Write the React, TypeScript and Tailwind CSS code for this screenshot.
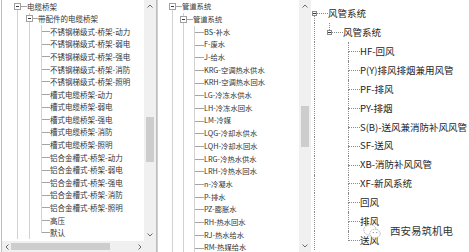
import React from 'react';

type Col = { guide: string; ml: string; boxMl: string; own: string };

type Panel = {
  row: string;
  pad: string;
  cols: Col[];
  guides: boolean[];
  vLine: string;
  hLine: string;
  box: string;
  text: string;
};

type Item = { label: string; level: number; open?: boolean; last?: boolean };

const leftPanel: Panel = {
  row: 'h-[12.6px]',
  pad: 'pl-[10px] pt-0',
  cols: [
    { guide: 'w-[12px]', ml: 'ml-[5px]', boxMl: 'ml-[2px]', own: 'w-[15px]' },
    { guide: 'w-[12px]', ml: 'ml-[5px]', boxMl: 'ml-[2px]', own: 'w-[14px]' },
    { guide: 'w-[12px]', ml: 'ml-[5px]', boxMl: 'ml-[2px]', own: 'w-[14px]' },
  ],
  guides: [true, true],
  vLine: 'w-px bg-[#d2d2d2]',
  hLine: 'h-px bg-[#a4a4a4]',
  box: 'w-[7px] h-[7px] shrink-0 border border-[#a0a0a0] bg-white flex items-center justify-center',
  text: 'text-[7.5px] text-[#333]',
};

const midPanel: Panel = {
  row: 'h-[12.7px]',
  pad: 'pl-[9px] pt-[0.6px]',
  cols: [
    { guide: 'w-[11px]', ml: 'ml-[5px]', boxMl: 'ml-[2px]', own: 'w-[15px]' },
    { guide: 'w-[11px]', ml: 'ml-[5px]', boxMl: 'ml-[2px]', own: 'w-[15px]' },
    { guide: 'w-[11px]', ml: 'ml-[5px]', boxMl: 'ml-[2px]', own: 'w-[15px]' },
  ],
  guides: [true, true],
  vLine: 'w-px bg-[#d2d2d2]',
  hLine: 'h-px bg-[#a4a4a4]',
  box: 'w-[7px] h-[7px] shrink-0 border border-[#a0a0a0] bg-white flex items-center justify-center',
  text: 'text-[7.3px] text-[#333]',
};

const rightPanel: Panel = {
  row: 'h-[18.9px]',
  pad: 'pl-0 pt-[4.5px]',
  cols: [
    { guide: 'w-[11px]', ml: 'ml-[3px]', boxMl: 'ml-[1px]', own: 'w-[17px]' },
    { guide: 'w-[15px]', ml: 'ml-[7px]', boxMl: 'ml-[5px]', own: 'w-[21px]' },
    { guide: 'w-[21px]', ml: 'ml-[11px]', boxMl: 'ml-[9px]', own: 'w-[23px]' },
  ],
  guides: [true, false],
  vLine: 'w-0 border-l border-dotted border-[#8a8a8a]',
  hLine: 'h-0 border-t border-dotted border-[#8a8a8a]',
  box: 'w-[5px] h-[5px] shrink-0 border border-[#8a8a8a] bg-white flex items-center justify-center',
  text: 'text-[9.5px] text-[#1e1e1e]',
};

const leaf = (label: string, last?: boolean): Item => ({ label, level: 2, last });

const leftItems: Item[] = [
  { label: '电缆桥架', level: 0, open: true },
  { label: '带配件的电缆桥架', level: 1, open: true },
  ...[
    '不锈钢梯级式-桥架-动力',
    '不锈钢梯级式-桥架-弱电',
    '不锈钢梯级式-桥架-强电',
    '不锈钢梯级式-桥架-消防',
    '不锈钢梯级式-桥架-照明',
    '槽式电缆桥架-动力',
    '槽式电缆桥架-弱电',
    '槽式电缆桥架-强电',
    '槽式电缆桥架-消防',
    '槽式电缆桥架-照明',
    '铝合金槽式-桥架-动力',
    '铝合金槽式-桥架-弱电',
    '铝合金槽式-桥架-强电',
    '铝合金槽式-桥架-消防',
    '铝合金槽式-桥架-照明',
    '高压',
  ].map((l) => leaf(l)),
  leaf('默认', true),
];

const midItems: Item[] = [
  { label: '管道系统', level: 0, open: true },
  { label: '管道系统', level: 1, open: true },
  ...[
    'BS-补水',
    'F-废水',
    'J-给水',
    'KRG-空调热水供水',
    'KRH-空调热水回水',
    'LG-冷冻水供水',
    'LH-冷冻水回水',
    'LM-冷媒',
    'LQG-冷却水供水',
    'LQH-冷却水回水',
    'LRG-冷热水供水',
    'LRH-冷热水回水',
    'n-冷凝水',
    'P-排水',
    'PZ-膨胀水',
    'RH-热水回水',
    'RJ-热水给水',
    'RM-热媒给水',
  ].map((l) => leaf(l)),
];

const rightItems: Item[] = [
  { label: '风管系统', level: 0, open: true },
  { label: '风管系统', level: 1, open: true, last: true },
  ...[
    'HF-回风',
    'P(Y)排风排烟兼用风管',
    'PF-排风',
    'PY-排烟',
    'S(B)-送风兼消防补风风管',
    'SF-送风',
    'XB-消防补风风管',
    'XF-新风系统',
    '回风',
    '排风',
  ].map((l) => leaf(l)),
  leaf('送风', true),
];

function TreeRow({ p, item, first }: { p: Panel; item: Item; first: boolean }) {
  const col = p.cols[item.level];
  const top = !first;
  const bottom = !item.last;
  return (
    <div className={`${p.row} flex shrink-0`}>
      {p.guides.slice(0, item.level).map((g, i) => (
        <div key={i} className={`${p.cols[i].guide} flex shrink-0`}>
          {g && <div className={`${p.cols[i].ml} ${p.vLine}`} />}
        </div>
      ))}
      <div className={`${col.own} flex shrink-0`}>
        {item.open ? (
          <div className={`${col.boxMl} flex flex-col items-center`}>
            <div className={`flex-1 ${top ? p.vLine : ''}`} />
            <div className={p.box}>
              <div className="w-[3px] h-px bg-[#3a3a3a]" />
            </div>
            <div className={`flex-1 ${bottom ? p.vLine : ''}`} />
          </div>
        ) : (
          <div className={`${col.ml} flex flex-col`}>
            <div className={`flex-1 ${p.vLine}`} />
            <div className={`flex-1 ${bottom ? p.vLine : 'w-px'}`} />
          </div>
        )}
        <div className="flex-1 flex flex-col justify-center">
          <div className={p.hLine} />
        </div>
      </div>
      <div className={`flex items-center whitespace-nowrap leading-none ${p.text}`}>{item.label}</div>
    </div>
  );
}

function Tree({ p, items }: { p: Panel; items: Item[] }) {
  return (
    <div className={`flex-1 min-w-0 overflow-hidden flex flex-col ${p.pad}`}>
      {items.map((it, i) => (
        <TreeRow key={i} p={p} item={it} first={i === 0} />
      ))}
    </div>
  );
}

function Chevron({ dir }: { dir: 'up' | 'down' | 'left' | 'right' }) {
  const pts =
    dir === 'up'
      ? '0.5,3.5 3,1 5.5,3.5'
      : dir === 'down'
        ? '0.5,0.5 3,3 5.5,0.5'
        : dir === 'left'
          ? '3.5,0.5 1,3 3.5,5.5'
          : '0.5,0.5 3,3 0.5,5.5';
  const vertical = dir === 'up' || dir === 'down';
  return (
    <svg width={vertical ? 6 : 4} height={vertical ? 4 : 6} viewBox={vertical ? '0 0 6 4' : '0 0 4 6'}>
      <polyline points={pts} fill="none" stroke="#6a6a6a" strokeWidth="1" />
    </svg>
  );
}

function VScroll({ thumb }: { thumb: string }) {
  return (
    <div className="w-[12px] shrink-0 bg-[#f0f0f0] flex flex-col items-center">
      <div className="h-[12px] w-full flex items-center justify-center">
        <Chevron dir="up" />
      </div>
      <div className="flex-1 w-full flex flex-col items-center">
        <div className={`w-[8px] bg-[#cdcdcd] ${thumb}`} />
      </div>
      <div className="h-[12px] w-full flex items-center justify-center">
        <Chevron dir="down" />
      </div>
    </div>
  );
}

function WeChatMark() {
  return (
    <svg width="18" height="15" viewBox="0 0 18 15">
      <ellipse cx="7" cy="6" rx="6.2" ry="5.2" fill="#fff" stroke="#9a9a9a" strokeWidth="0.8" strokeDasharray="1.2 0.8" />
      <ellipse cx="12" cy="9.5" rx="5.2" ry="4.3" fill="#fff" stroke="#9a9a9a" strokeWidth="0.8" strokeDasharray="1.2 0.8" />
      <circle cx="10.3" cy="8.6" r="0.7" fill="#8a8a8a" />
      <circle cx="13.7" cy="8.6" r="0.7" fill="#8a8a8a" />
    </svg>
  );
}

export default function App() {
  return (
    <div className="relative w-[469px] h-[252px] bg-white overflow-hidden flex font-['Noto_Sans_CJK_SC',sans-serif]">
      {/* 电缆桥架 */}
      <div className="ml-[1px] w-[156px] h-full shrink-0 border-x border-[#bdbdbd] flex flex-col">
        <div className="flex-1 min-h-0 flex">
          <Tree p={leftPanel} items={leftItems} />
          <VScroll thumb="mt-[105px] h-[45px]" />
        </div>
        <div className="h-[11px] shrink-0 flex bg-[#f0f0f0]">
          <div className="flex-1 flex items-center">
            <div className="w-[9px] flex justify-center">
              <Chevron dir="left" />
            </div>
            <div className="w-[99px] h-[7px] bg-[#cdcdcd]" />
            <div className="flex-1" />
            <div className="w-[9px] flex justify-center">
              <Chevron dir="right" />
            </div>
          </div>
          <div className="w-[12px]" />
        </div>
      </div>

      {/* 管道系统 */}
      <div className="w-[154px] h-full shrink-0 border-l border-[#d0d0d0] flex">
        <Tree p={midPanel} items={midItems} />
        <VScroll thumb="mt-[94px] h-[41px]" />
      </div>

      {/* 风管系统 */}
      <div className="flex-1 h-full flex">
        <Tree p={rightPanel} items={rightItems} />
      </div>

      <div className="absolute left-[363px] top-[224px] flex items-center gap-[9px]">
        <WeChatMark />
        <span className="text-[10.5px] leading-none text-[#333] [text-shadow:0_0_2px_#fff,0_0_1px_#fff]">
          西安易筑机电
        </span>
      </div>
    </div>
  );
}
